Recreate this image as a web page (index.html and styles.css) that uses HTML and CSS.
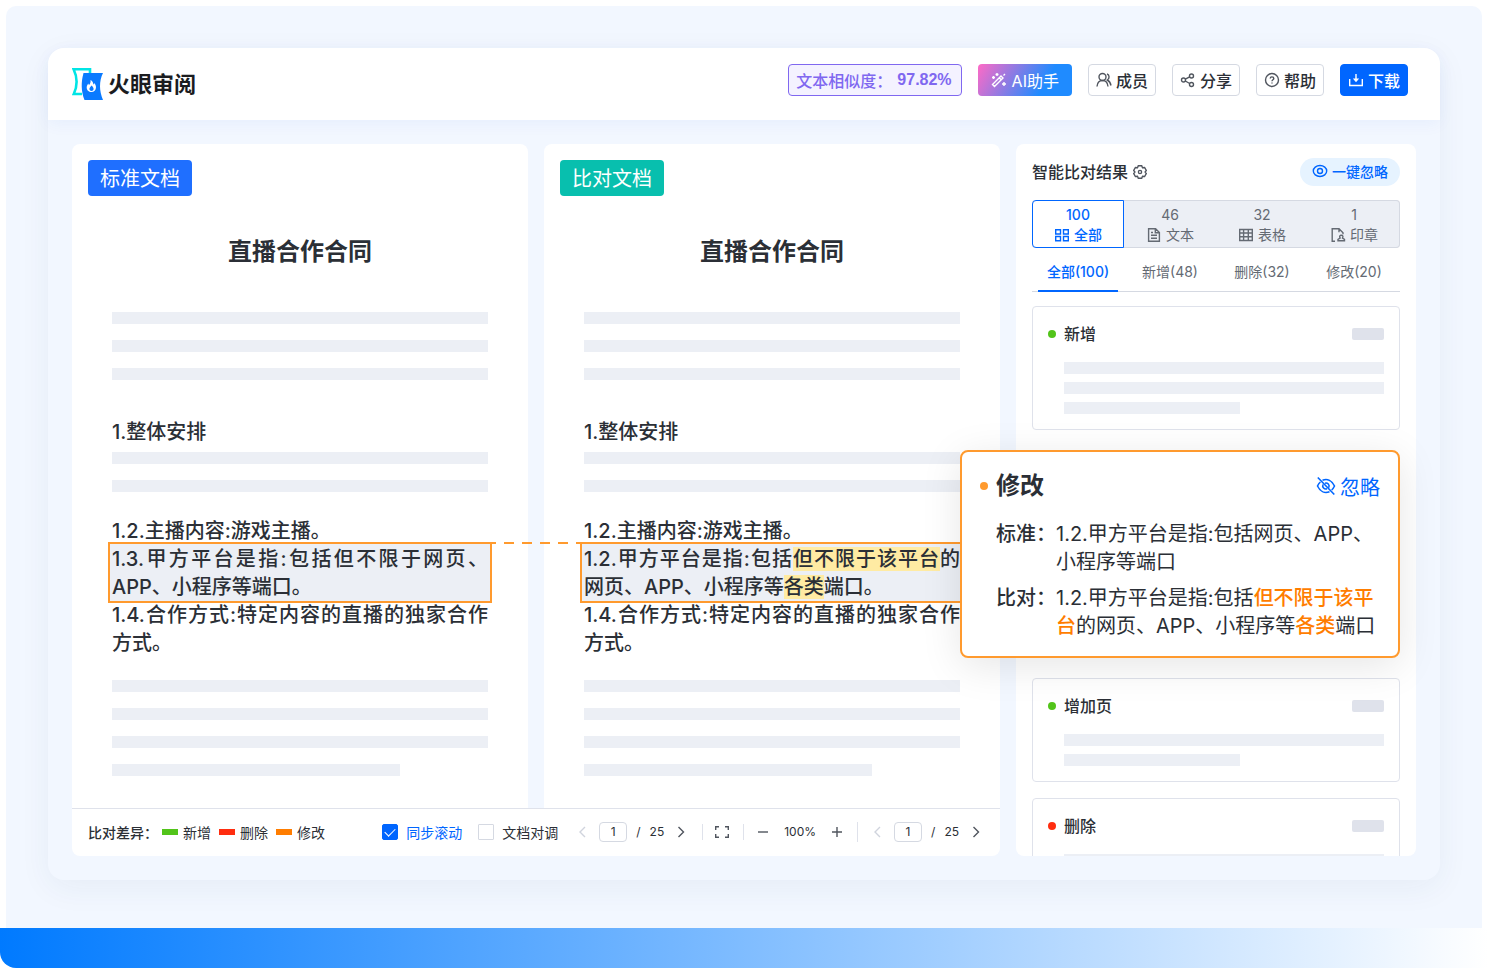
FILE: index.html
```
<!DOCTYPE html>
<html lang="zh-CN">
<head>
    <meta charset="UTF-8">
    <meta name="viewport" content="width=device-width, initial-scale=1.0">
    <title>火眼审阅</title>
    <link rel="stylesheet" href="styles.css">
</head>
<body>
    <div class="stage">
        <div class="window">
            <header class="header">
                <a class="logo" href="#">
                    <svg width="32" height="32" viewBox="0 0 32 32" fill="none">
                        <path d="M18 5V1.2H1.6C5.4 9 5.4 18 1.8 26H10" stroke="#00e5e5" stroke-width="2.6"/>
                        <path d="M11.500 5H31c-4 8-4 18 0 27H12.500C9 23 9 14 11.500 5z" fill="#0a7aff"/>
                        <path d="M18.500 12c2.800 1.500 2.600 3.500 3 4.500.5-.4.700-1 .7-1.600 1.200 1.300 1.800 2.900 1.800 4.300 0 3-2 4.900-4.600 4.900s-4.700-1.900-4.700-4.600c0-1.900 1-3 1.600-4.100.2.700.4 1.200.8 1.500 1.200-1.200 1.700-2.900 1.400-4.900z" fill="#fff"/>
                        <path d="M19.600 17.500c1.500 1.600 2 2.500 2 3.500 0 1.200-1 2-2.100 2s-2.100-.8-2.100-2c0-1 .8-1.900 2.200-3.500z" fill="#0a7aff"/>
                    </svg>
                    <span>火眼审阅</span>
                </a>
                <div class="actions">
                    <div class="similarity">文本相似度：<strong>97.82%</strong></div>
                    <button class="btn btn-ai" type="button">
                        <svg class="icon" viewBox="0 0 16 16"><path d="M1.500 12.500l8.500-8.500 2 2-8.500 8.500zM8.200 5.800l2 2M12.500 3.500l1.500-1.500M6 1v3M4.500 2.500h3M2.500 4v3M1 5.500h3M13 10v4M11 12h4"/></svg>
                        AI助手
                    </button>
                    <button class="btn" type="button">
                        <svg class="icon" viewBox="0 0 16 16"><circle cx="6.500" cy="5" r="3.500"/><path d="M1 14.500c.3-3.500 2.400-6 5.500-6s5.200 2.500 5.500 6M11 1.800c2.600 1 2.800 4.800.3 6.200 2 1 3.200 2.800 3.700 5.500"/></svg>
                        成员
                    </button>
                    <button class="btn" type="button">
                        <svg class="icon" viewBox="0 0 16 16"><circle cx="3.500" cy="8" r="2"/><circle cx="11.500" cy="4" r="2"/><circle cx="11.500" cy="12.500" r="2"/><path d="M5.300 7.100l4.400-2.200M5.300 9l4.400 2.500"/></svg>
                        分享
                    </button>
                    <button class="btn" type="button">
                        <svg class="icon" viewBox="0 0 16 16"><circle cx="8" cy="8" r="6.500"/><path d="M6.200 6.600c0-2.300 3.600-2.200 3.600-.1 0 1.300-1.800 1.300-1.800 2.700M8 10.400v1.200"/></svg>
                        帮助
                    </button>
                    <button class="btn btn-primary" type="button">
                        <svg class="icon" viewBox="0 0 16 16"><path d="M1.700 7v6.500h12.600V7M8 2v7"/><path class="fill" d="M4.800 6.500h6.400L8 10.200z"/></svg>
                        下载
                    </button>
                </div>
            </header>

            <main class="workspace">
                <div class="compare">
                    <div class="docs">
                        <article class="doc doc-standard">
                            <span class="tag">标准文档</span>
                            <h2>直播合作合同</h2>
                            <div class="lines">
                                <i></i><i></i><i></i>
                            </div>
                            <h3>1.整体安排</h3>
                            <div class="lines">
                                <i></i><i></i>
                            </div>
                            <div class="clauses">
                                <p>1.2.主播内容:游戏主播。</p>
                                <p class="diff linked">1.3.甲方平台是指:包括但不限于网页、APP、小程序等端口。</p>
                                <p>1.4.合作方式:特定内容的直播的独家合作方式。</p>
                            </div>
                            <div class="lines">
                                <i></i><i></i><i></i><i class="short"></i>
                            </div>
                        </article>
                        <article class="doc doc-compare">
                            <span class="tag tag-green">比对文档</span>
                            <h2>直播合作合同</h2>
                            <div class="lines">
                                <i></i><i></i><i></i>
                            </div>
                            <h3>1.整体安排</h3>
                            <div class="lines">
                                <i></i><i></i>
                            </div>
                            <div class="clauses">
                                <p>1.2.主播内容:游戏主播。</p>
                                <p class="diff">1.2.甲方平台是指:包括<mark>但不限于该平台</mark>的网页、APP、小程序等<mark>各类</mark>端口。</p>
                                <p>1.4.合作方式:特定内容的直播的独家合作方式。</p>
                            </div>
                            <div class="lines">
                                <i></i><i></i><i></i><i class="short"></i>
                            </div>
                        </article>
                    </div>

                    <footer class="toolbar">
                        <div class="legend">
                            <span class="legend-title">比对差异：</span>
                            <span class="legend-item added">新增</span>
                            <span class="legend-item removed">删除</span>
                            <span class="legend-item changed">修改</span>
                        </div>
                        <div class="tools">
                            <label class="check"><input type="checkbox" checked><span>同步滚动</span></label>
                            <label class="check"><input type="checkbox"><span>文档对调</span></label>
                            <div class="pager">
                                <button type="button" aria-label="上一页" disabled><svg class="icon" viewBox="0 0 16 16"><path d="M11 3L6 8l5 5"/></svg></button>
                                <input type="text" value="1" aria-label="标准文档页码">
                                <span>/</span><span>25</span>
                                <button type="button" aria-label="下一页"><svg class="icon" viewBox="0 0 16 16"><path d="M5.500 3l5 5-5 5"/></svg></button>
                            </div>
                            <div class="zoom">
                                <button type="button" aria-label="全屏"><svg class="icon" viewBox="0 0 16 16"><path d="M1.700 6V2.700H5M11 2.700h3.300V6M14.300 10v3.300H11M5 13.300H1.700V10"/></svg></button>
                            </div>
                            <div class="zoom">
                                <button type="button" aria-label="缩小"><svg class="icon" viewBox="0 0 16 16"><path d="M3 8h10"/></svg></button>
                                <span>100%</span>
                                <button type="button" aria-label="放大"><svg class="icon" viewBox="0 0 16 16"><path d="M3 8h10M8 3v10"/></svg></button>
                            </div>
                            <div class="pager pager-last">
                                <button type="button" aria-label="上一页" disabled><svg class="icon" viewBox="0 0 16 16"><path d="M11 3L6 8l5 5"/></svg></button>
                                <input type="text" value="1" aria-label="比对文档页码">
                                <span>/</span><span>25</span>
                                <button type="button" aria-label="下一页"><svg class="icon" viewBox="0 0 16 16"><path d="M5.500 3l5 5-5 5"/></svg></button>
                            </div>
                        </div>
                    </footer>
                </div>

                <aside class="results">
                    <div class="results-head">
                        <h4>智能比对结果</h4>
                        <button class="settings" type="button" aria-label="设置"><svg class="icon" viewBox="0 0 16 16"><path d="M6.300 1.800h3.400l.8 1.900 2.100-.2 1.700 2.900L13.100 8l1.200 1.600-1.700 2.900-2.100-.2-.8 1.900H6.300l-.8-1.900-2.100.2-1.700-2.900L2.900 8 1.700 6.400l1.700-2.900 2.100.2z"/><circle cx="8" cy="8" r="1.600"/></svg></button>
                        <button class="ignore-all" type="button">
                            <svg class="icon" viewBox="0 0 16 16"><ellipse cx="8" cy="8" rx="6.700" ry="5.500"/><circle cx="8" cy="8" r="2.500"/></svg>
                            一键忽略
                        </button>
                    </div>

                    <div class="types">
                        <button class="active" type="button">
                            <span>100</span>
                            <span class="type-name"><svg class="icon" viewBox="0 0 16 16"><path d="M1.700 2.700h4.800v4.300H1.700zM9.500 2.700h4.800v4.300H9.500zM1.700 9.500h4.800v4.300H1.700zM9.500 9.500h4.800v4.300H9.500z"/></svg>全部</span>
                        </button>
                        <button type="button">
                            <span>46</span>
                            <span class="type-name"><svg class="icon" viewBox="0 0 16 16"><path d="M2.600 1.700h7l3.800 3.800v8.800H2.600zM9.300 1.700v4h4M5 5.500h2M5 8.300h6M5 11.200h6"/></svg>文本</span>
                        </button>
                        <button type="button">
                            <span>32</span>
                            <span class="type-name"><svg class="icon" viewBox="0 0 16 16"><path d="M1.700 2.500h12.600v11H1.700zM1.700 6h12.600M1.700 9.700h12.600M5.600 2.500v11M10.300 2.500v11"/></svg>表格</span>
                        </button>
                        <button type="button">
                            <span>1</span>
                            <span class="type-name"><svg class="icon" viewBox="0 0 16 16"><path d="M5 14.300H2.200V1.700H9l4 4v1.500M9 1.700v3.500M8 13.800h6.500v-1.500l-2-1.300c1-1.700.2-2.700-1.200-2.700s-2.300 1-1.200 2.700L8 12.300z"/></svg>印章</span>
                        </button>
                    </div>

                    <nav class="tabs">
                        <a class="active" href="#">全部(100)</a>
                        <a href="#">新增(48)</a>
                        <a href="#">删除(32)</a>
                        <a href="#">修改(20)</a>
                    </nav>

                    <div class="card">
                        <div class="card-head added"><h5>新增</h5><i></i></div>
                        <div class="card-lines"><i></i><i></i><i class="short"></i></div>
                    </div>
                    <div class="card after-popup">
                        <div class="card-head added"><h5>增加页</h5><i></i></div>
                        <div class="card-lines"><i></i><i class="short"></i></div>
                    </div>
                    <div class="card">
                        <div class="card-head removed"><h5>删除</h5><i></i></div>
                        <div class="card-lines"><i></i><i class="short"></i></div>
                    </div>
                </aside>

                <section class="popup">
                    <div class="popup-head">
                        <h4>修改</h4>
                        <button type="button">
                            <svg class="icon" viewBox="0 0 20 20"><path d="M6.500 4.200c5-2 9.500.5 12 5.800-.8 1.700-1.700 3-2.800 4M13.500 15.700C8.500 17.700 4 15.300 1.500 10c.8-1.700 1.700-3 2.900-4M12.800 11.500c1.200-2.800-1.300-5-3.800-4.300M7 8.500c-1.100 2.700 1.300 5.200 4 4.300M9.500 9.500l2 2M1.800 1.500l16.500 17"/></svg>
                            忽略
                        </button>
                    </div>
                    <dl>
                        <dt>标准：</dt>
                        <dd>1.2.甲方平台是指:包括网页、APP、小程序等端口</dd>
                        <dt>比对：</dt>
                        <dd>1.2.甲方平台是指:包括<em>但不限于该平台</em>的网页、APP、小程序等<em>各类</em>端口</dd>
                    </dl>
                </section>
            </main>
        </div>
    </div>
    <div class="base"></div>
</body>
</html>
```
FILE: styles.css
```
* {
    box-sizing: border-box;
}

body {
    margin: 0;
    height: 100vh;
    display: flex;
    flex-direction: column;
    background-color: #fff;
    color: #2b2f36;
    font-family: Inter, "Noto Sans CJK SC", sans-serif;
    font-size: 14px;
}

h2, h3, h4, h5, p, dl, dd {
    margin: 0;
    font-weight: 500;
}

button, input {
    margin: 0;
    padding: 0;
    font-family: inherit;
    color: inherit;
}

button {
    border: none;
    background: none;
    cursor: pointer;
}

a {
    color: inherit;
    text-decoration: none;
}

.icon {
    display: block;
    flex: none;
    width: 16px;
    height: 16px;
    fill: none;
    stroke: currentColor;
    stroke-width: 1.4;
}

.icon .fill {
    fill: currentColor;
    stroke: none;
}

.stage {
    flex: 1;
    min-height: 0;
    margin: 6px 6px 0;
    padding: 42px 42px 48px;
    display: flex;
    background-color: #f2f7ff;
    border-radius: 10px 10px 0 0;
}

.base {
    height: 40px;
    flex: none;
    background: linear-gradient(90deg, #007aff, #fff);
    border-radius: 0 0 0 16px;
}

.window {
    flex: 1;
    min-width: 0;
    display: flex;
    flex-direction: column;
    background-color: #f2f7ff;
    border-radius: 16px;
    box-shadow: 0 8px 32px rgba(40, 60, 110, 0.06);
}

/* Header */
.header {
    height: 72px;
    flex: none;
    padding: 0 32px 8px 24px;
    display: flex;
    align-items: center;
    justify-content: space-between;
    background-color: #fff;
    border-radius: 16px 16px 0 0;
    box-shadow: 0 4px 16px rgba(0, 80, 220, 0.05);
}

.logo {
    display: flex;
    align-items: center;
    gap: 4px;
    padding-top: 8px;
    font-size: 22px;
    font-weight: 700;
    line-height: 32px;
    color: #1b1c1f;
}

.actions {
    display: flex;
    gap: 16px;
}

.similarity {
    height: 32px;
    padding: 0 9px 0 7px;
    display: flex;
    align-items: center;
    border: 1px solid #8068f0;
    border-radius: 4px;
    background-color: #f4f2ff;
    color: #8068f0;
    font-size: 16px;
    font-weight: 500;
}

.similarity strong {
    padding-left: 5px;
    font-family: "Liberation Sans", sans-serif;
}

.btn {
    height: 32px;
    padding: 0 7px;
    display: flex;
    align-items: center;
    gap: 4px;
    border: 1px solid #d5d9e2;
    border-radius: 4px;
    background-color: #fff;
    font-size: 16px;
    font-weight: 500;
}

.btn .icon {
    color: #50555e;
}

.btn-ai {
    padding: 0 13px;
    gap: 5px;
    border: none;
    background: linear-gradient(120deg, #ff6ac6, #1f8bff 70%);
    color: #fff;
    font-weight: 400;
}

.btn-primary {
    border-color: #0066ff;
    background-color: #0066ff;
    color: #fff;
}

.btn-ai .icon,
.btn-primary .icon {
    color: #fff;
}

/* Workspace */
.workspace {
    position: relative;
    flex: 1;
    min-height: 0;
    padding: 24px;
    display: grid;
    grid-template-columns: 1fr 400px;
    grid-template-rows: minmax(0, 1fr);
    gap: 16px;
}

.compare {
    min-height: 0;
    display: flex;
    flex-direction: column;
}

.docs {
    flex: 1;
    min-height: 0;
    display: grid;
    grid-template-columns: 1fr 1fr;
    gap: 16px;
}

.doc {
    padding: 16px 40px;
    background-color: #fff;
    border-radius: 8px 8px 0 0;
}

.tag {
    display: block;
    width: max-content;
    margin-left: -24px;
    padding: 2px 12px 0;
    border-radius: 4px;
    background-color: #1f6fff;
    color: #fff;
    font-size: 20px;
    line-height: 34px;
}

.tag-green {
    background-color: #08bfae;
}

.doc h2 {
    margin: 40px 0 44px;
    font-size: 24px;
    font-weight: 600;
    line-height: 32px;
    text-align: center;
}

.doc h3 {
    margin: 38px 0 6px;
    font-size: 20px;
    line-height: 28px;
}

.lines {
    display: flex;
    flex-direction: column;
    gap: 16px;
}

.lines i {
    height: 12px;
    background-color: #eceff5;
}

.lines .short {
    width: 288px;
}

.clauses {
    margin: 25px 0 23px;
    font-size: 20px;
    line-height: 28px;
    text-align: justify;
}

.diff {
    position: relative;
    margin: -3px -4px -2px;
    padding: 1px 2px 0;
    border: 2px solid #ff9a2e;
    background-color: #eceff5;
}

/* dashed link to the same clause in the other document */
.linked::after {
    content: "";
    position: absolute;
    z-index: 1;
    top: -2px;
    left: 100%;
    width: 90px;
    height: 2px;
    background: repeating-linear-gradient(90deg, #ff9a2e 0 6px, transparent 6px 14px, #ff9a2e 14px 18px);
}

mark {
    background-color: #ffeba3;
    color: inherit;
}

/* Toolbar */
.toolbar {
    height: 48px;
    flex: none;
    padding: 0 16px 2px;
    display: flex;
    align-items: center;
    justify-content: space-between;
    border-top: 1px solid #dfe2eb;
    border-radius: 0 0 8px 8px;
    background-color: #fff;
    white-space: nowrap;
}

.legend,
.tools,
.pager,
.zoom {
    display: flex;
    align-items: center;
}

.legend {
    gap: 8px;
}

.legend-title {
    margin-right: -4px;
    font-weight: 500;
}

.legend-item {
    display: flex;
    align-items: center;
    gap: 5px;
}

.legend-item::before {
    content: "";
    width: 16px;
    height: 6px;
    background-color: currentColor;
}

.legend-item.added::before {
    background-color: #52c41a;
}

.legend-item.removed::before {
    background-color: #ff2d0f;
}

.legend-item.changed::before {
    background-color: #ff7d00;
}

.check {
    display: flex;
    align-items: center;
    gap: 8px;
    margin-right: 16px;
}

.check input {
    appearance: none;
    width: 16px;
    height: 16px;
    border: 1px solid #d5d9e2;
    border-radius: 1px;
    display: grid;
    place-items: center;
}

.check input:checked {
    border-color: #0066ff;
    border-radius: 2px;
    background-color: #0066ff;
}

.check input:checked::after {
    content: "";
    width: 9px;
    height: 5px;
    border: solid #fff;
    border-width: 0 0 1px 1px;
    transform: translateY(-1px) rotate(-45deg);
}

.check input:checked + span {
    color: #0066ff;
}

.pager,
.zoom {
    font-size: 12px;
}

.pager {
    gap: 9px;
}

.pager input {
    width: 28px;
    height: 20px;
    border: 1px solid #d5d9e2;
    border-radius: 4px;
    font-size: 12px;
    text-align: center;
}

.zoom {
    gap: 13px;
}

.zoom,
.pager-last {
    margin-left: 12px;
    padding-left: 12px;
    background: linear-gradient(#dfe2eb, #dfe2eb) left center / 1px 20px no-repeat;
}

.zoom {
    margin-left: 13px;
}

.tools button {
    color: #50555e;
}

.tools button:disabled {
    color: #d0d4dd;
}

/* Results */
.results {
    min-height: 0;
    overflow: hidden;
    padding: 14px 16px 0;
    background-color: #fff;
    border-radius: 8px;
}

.results-head {
    display: flex;
    align-items: center;
    gap: 4px;
}

.results-head h4 {
    font-size: 16px;
    line-height: 28px;
}

.settings {
    color: #50555e;
}

.ignore-all {
    height: 28px;
    margin-left: auto;
    padding: 0 12px 2px;
    display: flex;
    align-items: center;
    gap: 4px;
    border-radius: 14px;
    background-color: #e6f3ff;
    color: #0066ff;
    font-size: 14px;
    font-weight: 500;
}

.types {
    margin-top: 14px;
    display: grid;
    grid-template-columns: repeat(4, 1fr);
    border-radius: 4px;
    background-color: #eceff5;
    box-shadow: inset 0 0 0 1px #d5d9e2;
}

.types button {
    height: 48px;
    padding-top: 2px;
    display: flex;
    flex-direction: column;
    align-items: center;
    justify-content: center;
    color: #646a73;
    font-size: 14px;
    line-height: 20px;
}

.types .active {
    border: 1px solid #0066ff;
    border-radius: 4px 0 0 4px;
    background-color: #fff;
    color: #0066ff;
    font-weight: 500;
}

.type-name {
    display: flex;
    align-items: center;
    gap: 4px;
}

.tabs {
    padding-top: 6px;
    display: grid;
    grid-template-columns: repeat(4, 1fr);
    box-shadow: inset 0 -1px #d5d9e2;
    color: #646a73;
}

.tabs a {
    margin: 0 6px;
    border-bottom: 2px solid transparent;
    line-height: 36px;
    text-align: center;
}

.tabs .active {
    border-color: #0066ff;
    color: #0066ff;
    font-weight: 500;
}

.card {
    margin-top: 16px;
    padding: 15px;
    border: 1px solid #dfe2eb;
    border-radius: 4px;
}

.tabs + .card {
    margin-top: 14px;
}

/* leaves room for the enlarged card */
.after-popup {
    margin-top: 248px;
}

.card-head {
    display: flex;
    align-items: center;
    gap: 8px;
}

.card-head::before,
.popup-head::before {
    content: "";
    width: 8px;
    height: 8px;
    border-radius: 50%;
    background-color: #52c41a;
}

.card-head.removed::before {
    background-color: #ff2d0f;
}

.card-head h5 {
    font-size: 16px;
    line-height: 24px;
}

.card-head i {
    width: 32px;
    height: 12px;
    margin-left: auto;
    border-radius: 2px;
    background-color: #dfe2eb;
}

.card-lines {
    margin: 16px 0 0 16px;
    display: flex;
    flex-direction: column;
    gap: 8px;
}

.card-lines i {
    height: 12px;
    background-color: #eceff5;
}

.card-lines .short {
    width: 176px;
}

/* Enlarged card over the results list */
.popup {
    position: absolute;
    z-index: 2;
    top: 330px;
    right: 40px;
    width: 440px;
    padding: 16px 18px;
    border: 2px solid #ff9a2e;
    border-radius: 8px;
    background-color: #fff;
    box-shadow: 0 8px 40px rgba(0, 0, 0, 0.1);
    font-size: 20px;
    line-height: 28px;
}

.popup-head {
    display: flex;
    align-items: center;
    gap: 8px;
}

.popup-head::before {
    background-color: #ff9a2e;
}

.popup-head h4 {
    font-size: 24px;
    font-weight: 600;
    line-height: 36px;
}

.popup-head button {
    margin-left: auto;
    display: flex;
    align-items: center;
    gap: 4px;
    color: #0066ff;
    font-size: 20px;
}

.popup-head .icon {
    width: 20px;
    height: 20px;
    stroke-width: 1.6;
}

.popup dl {
    margin: 16px 0 0 16px;
    display: grid;
    grid-template-columns: 60px 1fr;
    row-gap: 8px;
}

.popup dt {
    font-weight: 500;
}

.popup dd {
    font-weight: 400;
}

.popup em {
    color: #ff7d00;
    font-style: normal;
    font-weight: 500;
}
```
